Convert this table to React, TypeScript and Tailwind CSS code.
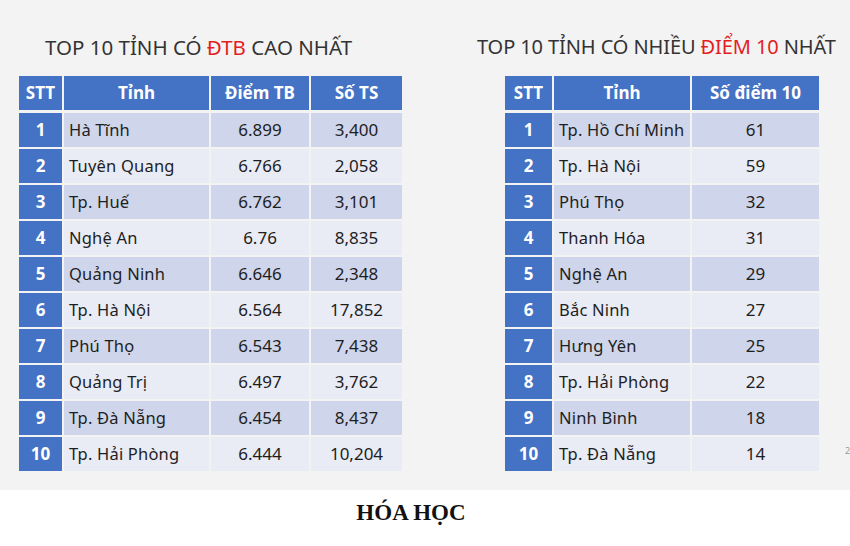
const dtb = [
  ["1", "Hà Tĩnh", "6.899", "3,400"],
  ["2", "Tuyên Quang", "6.766", "2,058"],
  ["3", "Tp. Huế", "6.762", "3,101"],
  ["4", "Nghệ An", "6.76", "8,835"],
  ["5", "Quảng Ninh", "6.646", "2,348"],
  ["6", "Tp. Hà Nội", "6.564", "17,852"],
  ["7", "Phú Thọ", "6.543", "7,438"],
  ["8", "Quảng Trị", "6.497", "3,762"],
  ["9", "Tp. Đà Nẵng", "6.454", "8,437"],
  ["10", "Tp. Hải Phòng", "6.444", "10,204"],
];

const diem10 = [
  ["1", "Tp. Hồ Chí Minh", "61"],
  ["2", "Tp. Hà Nội", "59"],
  ["3", "Phú Thọ", "32"],
  ["4", "Thanh Hóa", "31"],
  ["5", "Nghệ An", "29"],
  ["6", "Bắc Ninh", "27"],
  ["7", "Hưng Yên", "25"],
  ["8", "Tp. Hải Phòng", "22"],
  ["9", "Ninh Bình", "18"],
  ["10", "Tp. Đà Nẵng", "14"],
];

function Table({
  head,
  rows,
  cols,
}: {
  head: string[];
  rows: string[][];
  cols: string;
}) {
  return (
    <div className={`grid ${cols} gap-x-[2px] gap-y-[2px]`}>
      {head.map((h) => (
        <div
          key={h}
          className="h-[34px] mb-[1px] bg-[#4472c4] text-white font-bold text-[17px] flex items-center justify-center"
        >
          {h}
        </div>
      ))}
      {rows.map((r, i) => {
        const bg = i % 2 === 0 ? "bg-[#cfd5ea]" : "bg-[#e9ebf5]";
        return r.map((c, j) => {
          if (j === 0)
            return (
              <div
                key={i + "-" + j}
                className="h-[34px] bg-[#4472c4] text-white font-bold text-[17px] flex items-center justify-center"
              >
                {c}
              </div>
            );
          if (j === 1)
            return (
              <div
                key={i + "-" + j}
                className={`h-[34px] ${bg} text-[#1e1e1e] text-[16.5px] flex items-center pl-[5px] tracking-[0.2px]`}
              >
                {c}
              </div>
            );
          return (
            <div
              key={i + "-" + j}
              className={`h-[34px] ${bg} text-[#1e1e1e] text-[17px] flex items-center justify-center`}
            >
              {c}
            </div>
          );
        });
      })}
    </div>
  );
}

export default function App() {
  return (
    <div
      className="w-[850px] h-[546px] bg-white relative overflow-hidden"
      style={{ fontFamily: '"Noto Sans", "Open Sans", sans-serif' }}
    >
      <div className="h-[490px] bg-[#f3f3f3] flex pt-[33px]">
        <div className="w-[470px] pl-[19px]">
          <h2 className="ml-[26px] h-[43px] text-[20.5px] text-[#333] leading-[28px] whitespace-nowrap">
            TOP 10 TỈNH CÓ <span className="text-[#e31e1e]">ĐTB</span> CAO NHẤT
          </h2>
          <Table
            head={["STT", "Tỉnh", "Điểm TB", "Số TS"]}
            rows={dtb}
            cols="grid-cols-[43px_145px_98px_91px] w-[383px]"
          />
        </div>
        <div className="pl-[7px]">
          <h2 className="h-[43px] text-[20px] text-[#333] tracking-[-0.1px] leading-[28px] whitespace-nowrap">
            TOP 10 TỈNH CÓ NHIỀU <span className="text-[#e31e1e]">ĐIỂM 10</span> NHẤT
          </h2>
          <div className="ml-[28px]">
            <Table
              head={["STT", "Tỉnh", "Số điểm 10"]}
              rows={diem10}
              cols="grid-cols-[47px_136px_127px] w-[314px]"
            />
          </div>
        </div>
      </div>
      <div
        className="text-center text-[23px] font-bold text-[#111] pt-[6px] mr-[28px]"
        style={{ fontFamily: '"Liberation Serif", serif' }}
      >
        HÓA HỌC
      </div>
      <span className="absolute left-[845px] top-[444px] text-[9px] text-[#999]">2</span>
    </div>
  );
}
